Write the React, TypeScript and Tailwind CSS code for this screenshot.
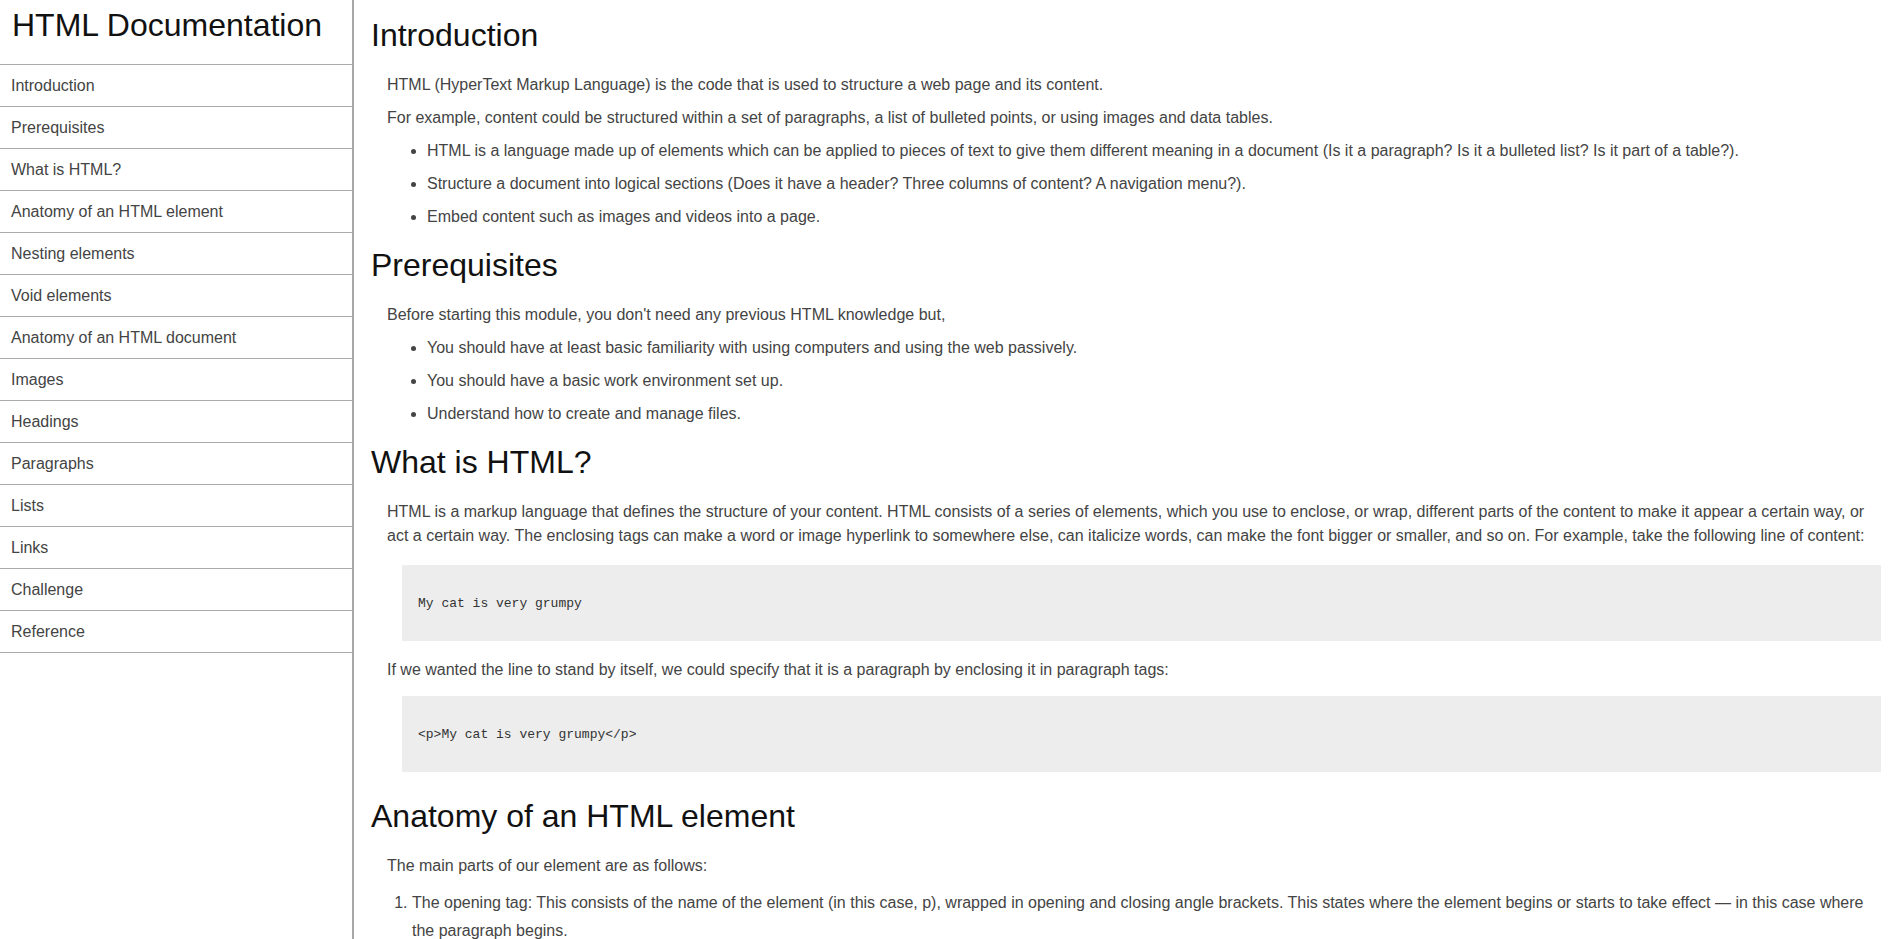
import React from "react";

const navItems = [
  "Introduction",
  "Prerequisites",
  "What is HTML?",
  "Anatomy of an HTML element",
  "Nesting elements",
  "Void elements",
  "Anatomy of an HTML document",
  "Images",
  "Headings",
  "Paragraphs",
  "Lists",
  "Links",
  "Challenge",
  "Reference",
];

function Heading({ children }: { children: React.ReactNode }) {
  return <h2 className="mb-[19px] ml-[2px] text-[32px] leading-[37px] text-[#111]">{children}</h2>;
}

function Code({ children, tight }: { children: React.ReactNode; tight?: boolean }) {
  return (
    <pre
      className={`${tight ? "mt-[5px]" : "mt-[8px]"} mb-[8px] ml-[15px] bg-[#ededed] px-4 py-[26px] font-['DejaVu_Sans_Mono',monospace] text-[13px] leading-[23px] text-[#333]`}
    >
      <code>{children}</code>
    </pre>
  );
}

export default function App() {
  return (
    <div className="flex h-screen overflow-hidden bg-white font-['Liberation_Sans',Arial,sans-serif] text-[#444]">
      <nav className="h-full w-[354px] shrink-0 border-r-2 border-[#a8a8a8]">
        <header className="h-[64px] pl-3 pt-[7px]">
          <h1 className="text-[32px] leading-[37px] text-[#111]">HTML Documentation</h1>
        </header>
        <ul className="border-b border-[#aaa]">
          {navItems.map((item) => (
            <li key={item} className="border-t border-[#aaa]">
              <a href="#" className="flex h-[41px] items-center pl-[11px] text-base leading-6 text-[#444]">
                {item}
              </a>
            </li>
          ))}
        </ul>
      </nav>

      <main className="min-w-0 flex-1 pl-[15px] pr-[11px] pt-[17px]">
        <section className="mb-[18px]">
          <Heading>Introduction</Heading>
          <div className="ml-[18px] flex flex-col gap-[9px] text-base leading-6">
            <p>HTML (HyperText Markup Language) is the code that is used to structure a web page and its content.</p>
            <p>For example, content could be structured within a set of paragraphs, a list of bulleted points, or using images and data tables.</p>
            <ul className="list-disc space-y-[9px] pl-10">
              <li>HTML is a language made up of elements which can be applied to pieces of text to give them different meaning in a document (Is it a paragraph? Is it a bulleted list? Is it part of a table?).</li>
              <li>Structure a document into logical sections (Does it have a header? Three columns of content? A navigation menu?).</li>
              <li>Embed content such as images and videos into a page.</li>
            </ul>
          </div>
        </section>

        <section className="mb-[18px]">
          <Heading>Prerequisites</Heading>
          <div className="ml-[18px] flex flex-col gap-[9px] text-base leading-6">
            <p>Before starting this module, you don't need any previous HTML knowledge but,</p>
            <ul className="list-disc space-y-[9px] pl-10">
              <li>You should have at least basic familiarity with using computers and using the web passively.</li>
              <li>You should have a basic work environment set up.</li>
              <li>Understand how to create and manage files.</li>
            </ul>
          </div>
        </section>

        <section className="mb-[18px]">
          <Heading>What is HTML?</Heading>
          <div className="ml-[18px] flex flex-col gap-[9px] text-base leading-6">
            <p>
              HTML is a markup language that defines the structure of your content. HTML consists of a series of elements, which you use to enclose, or wrap, different parts of the content to make it appear a certain way, or act a certain way. The enclosing tags can make a word or image hyperlink to somewhere else, can italicize words, can make the font bigger or smaller, and so on. For example, take the following line of content:
            </p>
            <Code>My cat is very grumpy</Code>
            <p>If we wanted the line to stand by itself, we could specify that it is a paragraph by enclosing it in paragraph tags:</p>
            <Code tight>{"<p>My cat is very grumpy</p>"}</Code>
          </div>
        </section>

        <section>
          <Heading>Anatomy of an HTML element</Heading>
          <div className="ml-[18px] flex flex-col gap-[9px] text-base leading-6">
            <p>The main parts of our element are as follows:</p>
            <ol className="mt-[2px] list-decimal pl-[25px] leading-[28px]">
              <li>The opening tag: This consists of the name of the element (in this case, p), wrapped in opening and closing angle brackets. This states where the element begins or starts to take effect — in this case where the paragraph begins.</li>
            </ol>
          </div>
        </section>
      </main>
    </div>
  );
}
